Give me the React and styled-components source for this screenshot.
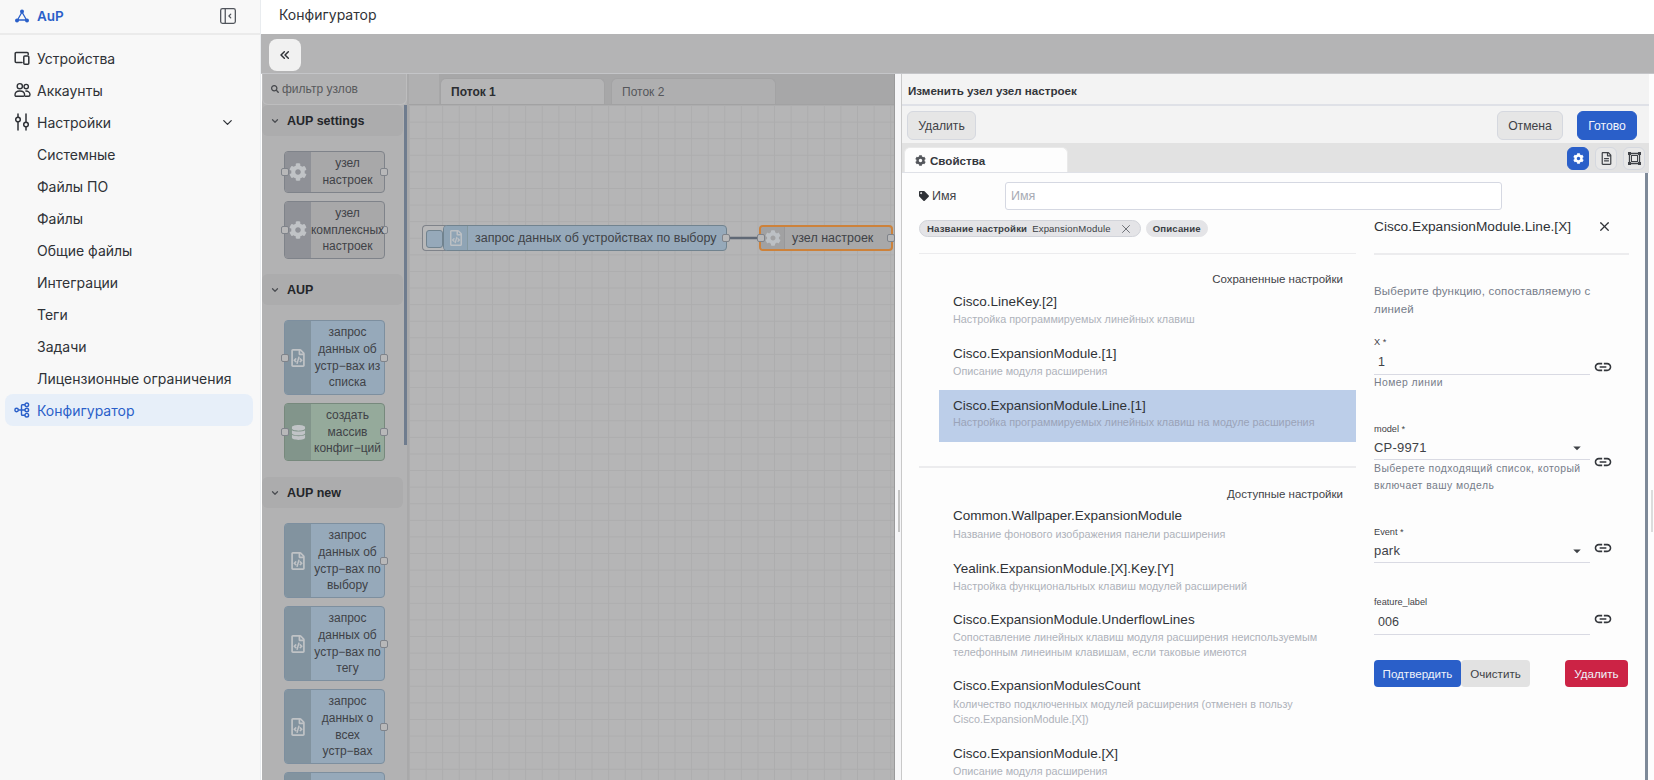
import React from 'react';
import styled, { createGlobalStyle } from 'styled-components';
import { FaCog, FaRegFileCode, FaDatabase, FaTag, FaRegFileAlt, FaSearch } from 'react-icons/fa';
import { TbChevronDown, TbChevronsLeft, TbLayoutSidebarLeftCollapse, TbX } from 'react-icons/tb';
import { MdLink, MdArrowDropDown } from 'react-icons/md';

const GlobalStyle = createGlobalStyle`
  html, body { margin: 0; padding: 0; height: 100%; overflow: hidden; }
  body { font-family: Inter, "Liberation Sans", sans-serif; background: #fff; }
  #root { height: 100%; }
  * { box-sizing: border-box; }
`;

const Page = styled.div`
  display: flex;
  width: 1654px;
  height: 780px;
  overflow: hidden;
`;

const Sidebar = styled.aside`
  width: 261px;
  flex: none;
  background: #f8f8f8;
  border-right: 1px solid #e9ecef;
  display: flex;
  flex-direction: column;
`;

const Brand = styled.div`
  height: 35px;
  border-bottom: 2px solid #ebebeb;
  display: flex;
  align-items: center;
  padding: 0 21px 2px 14px;
`;

const BrandName = styled.span`
  margin-left: 7px;
  font-size: 13.5px;
  font-weight: 600;
  color: #2a5fc9;
  flex: 1;
`;

const Nav = styled.nav`
  padding: 7px 7px 0 5px;
  display: flex;
  flex-direction: column;
`;

const NavItem = styled.div`
  height: 32px;
  display: flex;
  align-items: center;
  padding: 0 18px 0 9px;
  border-radius: 8px;
  font-size: 14px;
  white-space: nowrap;
  color: ${p => (p.$active ? '#2a5fc9' : '#2f3237')};
  background: ${p => (p.$active ? '#e7eff9' : 'transparent')};
  svg { flex: none; }
`;

const NavIcon = styled.span`
  width: 23px;
  flex: none;
  display: flex;
  align-items: center;
`;

const NavLabel = styled.span`
  flex: 1;
`;

const SubNavItem = styled(NavItem)`
  padding-left: 32px;
`;

const Main = styled.main`
  flex: 1;
  min-width: 0;
  display: flex;
  flex-direction: column;
  position: relative;
`;

const TopBar = styled.header`
  height: 34px;
  flex: none;
  background: #fff;
  display: flex;
  align-items: center;
  padding: 0 18px 5px;
  font-size: 14px;
  color: #2f3237;
`;

const Toolbar = styled.div`
  height: 40px;
  flex: none;
  background: #b4b4b5;
  border-bottom: 1px solid #c4c5c8;
  padding: 5px 8px;
`;

const CollapseButton = styled.button`
  width: 32px;
  height: 32px;
  border: 0;
  padding: 0;
  border-radius: 8px;
  background: #f1f1f1;
  color: #2f3237;
  display: flex;
  align-items: center;
  justify-content: center;
`;

const Editor = styled.div`
  flex: 1;
  min-height: 0;
  display: flex;
  font-family: "Liberation Sans", Arial, sans-serif;
`;

const Palette = styled.div`
  width: 147px;
  flex: none;
  margin-left: 1px;
  background: #b2b2b3;
  border-right: 2px solid #a9a9aa;
  position: relative;
  overflow: hidden;
`;

const PaletteFilter = styled.div`
  height: 31px;
  display: flex;
  align-items: center;
  gap: 3px;
  padding-left: 8px;
  font-size: 12px;
  color: #58595c;
  border: 1px solid #bdbdbe;
  border-top: 0;
  border-radius: 0 0 6px 6px;
  svg { color: #45474b; }
`;

const PaletteScroll = styled.span`
  position: absolute;
  right: 0;
  top: 31px;
  width: 3px;
  height: 340px;
  background: #6f7c8e;
`;

const PaletteSection = styled.section`
  padding-right: 4px;
  margin-bottom: ${p => p.$gap || 0}px;
`;

const CategoryHeader = styled.div`
  height: 31px;
  display: flex;
  align-items: center;
  gap: 7px;
  padding-left: 8px;
  background: #acacad;
  border-radius: 6px;
  font-size: 12.5px;
  font-weight: 700;
  color: #24262a;
  svg { color: #4b4d52; }
`;

const NodeStack = styled.div`
  padding: 15px 0 0 22px;
  display: flex;
  flex-direction: column;
  gap: ${p => p.$gap || 8}px;
`;

const PaletteNode = styled.div`
  width: 101px;
  height: ${p => p.$h}px;
  flex: none;
  position: relative;
  display: flex;
  border: 1px solid ${p => (p.$kind === 'blue' ? '#7d8f9f' : p.$kind === 'green' ? '#77897d' : '#7f838a')};
  border-radius: 4px;
  background: ${p => (p.$kind === 'blue' ? '#96a9ba' : p.$kind === 'green' ? '#95aa9b' : '#a8a8a9')};
`;

const NodeIcon = styled.div`
  width: 26px;
  flex: none;
  display: flex;
  align-items: center;
  justify-content: center;
  color: #c0c3c6;
  border-radius: 3px 0 0 3px;
  background: ${p => (p.$kind === 'blue' ? '#82939f' : p.$kind === 'green' ? '#82958b' : '#8f9197')};
`;

const NodeText = styled.div`
  flex: 1;
  min-width: 0;
  position: relative;
  z-index: 1;
  text-align: center;
  font-size: 12px;
  line-height: 16.6px;
  white-space: nowrap;
  color: #3f4247;
  display: flex;
  align-items: center;
  justify-content: center;
`;

const Port = styled.span`
  position: absolute;
  top: 50%;
  ${p => (p.$side === 'left' ? 'left: -4px;' : 'right: -4px;')}
  width: 8px;
  height: 8px;
  margin-top: -4px;
  background: #b8b8b9;
  border: 1px solid #7f838a;
  border-radius: 2px;
`;

const Flow = styled.div`
  width: 486px;
  flex: none;
  display: flex;
  flex-direction: column;
  border-right: 1px solid #9a9a9b;
`;

const TabStrip = styled.div`
  height: 31px;
  flex: none;
  background: linear-gradient(to right, #b0b0b1 30px, #a7a7a8 30px);
  border-bottom: 1px solid #a2a2a3;
  display: flex;
  align-items: flex-end;
  gap: 6px;
  padding-left: 31px;
`;

const FlowTab = styled.div`
  width: 165px;
  height: 26px;
  display: flex;
  align-items: center;
  padding-left: 10px;
  font-size: 12px;
  border: 1px solid #a3a3a4;
  border-bottom: 0;
  border-radius: 6px 6px 0 0;
  font-weight: ${p => (p.$active ? 700 : 400)};
  color: ${p => (p.$active ? '#2b2d31' : '#55575b')};
  background: ${p => (p.$active ? '#b5b5b6' : '#afafb0')};
`;

const Canvas = styled.div`
  flex: 1;
  position: relative;
  background-color: #b5b5b6;
  background-image:
    linear-gradient(#adadae 1px, transparent 1px),
    linear-gradient(90deg, #adadae 1px, transparent 1px);
  background-size: 16.6px 16.6px;
`;

const FlowNode = styled.div`
  position: absolute;
  top: 120px;
  left: ${p => p.$x}px;
  width: ${p => p.$w}px;
  height: 26px;
  display: flex;
  align-items: center;
  font-size: 12.5px;
  color: #3f4247;
  background: ${p => (p.$selected ? '#a8a8a9' : '#96a9ba')};
  border: ${p => (p.$selected ? '2px solid #cd823b' : '1px solid #71838f')};
  border-radius: 4px;
`;

const FlowNodeIcon = styled.span`
  width: 24px;
  height: 100%;
  flex: none;
  display: flex;
  align-items: center;
  justify-content: center;
  color: #bcc0c4;
  background: ${p => (p.$selected ? '#a1a1a2' : '#8fa4b5')};
  border-right: 1px solid ${p => (p.$selected ? '#98989a' : '#84989f')};
  border-radius: 3px 0 0 3px;
  margin-right: 7px;
`;

const InjectButton = styled.div`
  position: absolute;
  top: 120px;
  left: 13px;
  width: 24px;
  height: 26px;
  border: 1px solid #7f838a;
  border-right: 0;
  border-radius: 4px 0 0 4px;
  background: #b8b8b9;
  padding: 4px 3px;
  &::after {
    content: '';
    display: block;
    width: 15px;
    height: 16px;
    background: #96a9ba;
    border: 1px solid #71838f;
    border-radius: 3px;
  }
`;

const Wire = styled.svg`
  position: absolute;
  top: 131px;
  left: 320px;
`;

const Gutter = styled.div`
  width: 7px;
  flex: none;
  background: #f6f6f8;
  border-right: 1px solid #c9c9c9;
  padding: 416px 2px 0 3px;
`;

const GutterHandle = styled.span`
  display: block;
  width: 2px;
  height: 42px;
  background: #c4c4c4;
`;

const Tray = styled.div`
  width: 752px;
  flex: none;
  padding-right: 5px;
  background: #fdfdfd;
  display: flex;
  flex-direction: column;
  position: relative;
  overflow: hidden;
`;

const TrayHandle = styled.span`
  position: absolute;
  top: 416px;
  right: 1px;
  width: 2px;
  height: 42px;
  background: #dcdcdc;
`;

const TrayTitle = styled.div`
  height: 32px;
  flex: none;
  display: flex;
  align-items: center;
  padding: 3px 0 0 6px;
  background: #f3f3f3;
  border-bottom: 2px solid #dfe1e7;
  font-size: 11.6px;
  font-weight: 700;
  color: #33363b;
`;

const TrayActions = styled.div`
  height: 37px;
  flex: none;
  display: flex;
  align-items: flex-start;
  padding: 5px 12px 0 5px;
  background: #f3f3f3;
  gap: 14px;
`;

const ActionButton = styled.button`
  height: 29px;
  width: ${p => p.$w}px;
  padding: 0;
  border-radius: 6px;
  font-family: inherit;
  font-size: 12.2px;
  border: 1px solid ${p => (p.$primary ? '#2a5fc9' : '#d5d8df')};
  background: ${p => (p.$primary ? '#2a5fc9' : '#e6e6e6')};
  color: ${p => (p.$primary ? '#f2f5fb' : '#3f4247')};
`;

const Spacer = styled.span`
  flex: 1;
`;

const TrayTabs = styled.div`
  height: 30px;
  flex: none;
  display: flex;
  align-items: flex-end;
  background: #e2e2e2;
  border-bottom: 1px solid #dfe1e7;
  padding: 0 4px 0 2px;
`;

const PropsTab = styled.div`
  width: 164px;
  height: 25px;
  display: flex;
  align-items: center;
  gap: 4px;
  padding-left: 10px;
  background: #fdfdfd;
  border-radius: 6px 6px 0 0;
  border: 1px solid #e9e9e9;
  border-bottom: 0;
  font-size: 11.6px;
  font-weight: 700;
  color: #35383d;
  svg { color: #54575c; }
`;

const TabIcons = styled.div`
  margin-left: auto;
  align-self: center;
  display: flex;
  gap: 6px;
  padding-top: 1px;
`;

const TabIconButton = styled.div`
  width: 22px;
  height: 23px;
  border-radius: 6px;
  display: flex;
  align-items: center;
  justify-content: center;
  background: ${p => (p.$active ? '#2a5fc9' : '#e8e8e8')};
  color: ${p => (p.$active ? '#fff' : '#3f4247')};
  border: 1px solid ${p => (p.$active ? '#2a5fc9' : '#d5d8df')};
`;

const TrayBody = styled.div`
  flex: 1;
  min-height: 0;
  padding: 8px 0 0 17px;
  position: relative;
`;

const BodyScroll = styled.span`
  position: absolute;
  top: 0;
  right: 1px;
  width: 3px;
  height: 100%;
  background: #7e8a99;
`;

const NameRow = styled.div`
  display: flex;
  align-items: center;
  height: 29px;
`;

const NameLabel = styled.label`
  width: 86px;
  flex: none;
  display: flex;
  align-items: center;
  gap: 3px;
  font-size: 12.5px;
  color: #3f4247;
  svg { color: #2f3237; }
`;

const NameInput = styled.input`
  width: 497px;
  height: 28px;
  padding: 0 5px;
  border: 1px solid #d5d8e2;
  border-radius: 3px;
  background: #fff;
  font-family: inherit;
  font-size: 12.5px;
  &::placeholder { color: #a7abb4; }
`;

const Columns = styled.div`
  display: flex;
  gap: 18px;
  padding-top: 6px;
`;

const LeftColumn = styled.div`
  width: 437px;
  flex: none;
`;

const RightColumn = styled.div`
  width: 255px;
  flex: none;
`;

const Chips = styled.div`
  display: flex;
  gap: 5px;
  height: 17px;
  margin-top: 4px;
`;

const Chip = styled.div`
  height: 17px;
  display: flex;
  align-items: center;
  padding: 0 ${p => (p.$outline ? 7 : 6)}px;
  border-radius: 9px;
  background: #e4e4e7;
  border: 1px solid ${p => (p.$outline ? '#d2d4da' : '#e4e4e7')};
  font-size: 9.6px;
  letter-spacing: 0.15px;
  color: #3b3e44;
`;

const ChipKey = styled.b`
  font-weight: 700;
  margin-right: ${p => (p.$flush ? 0 : 5)}px;
`;

const ChipClose = styled(TbX)`
  margin-left: 8px;
  color: #55585e;
`;

const Divider = styled.hr`
  border: 0;
  height: ${p => p.$h || 1}px;
  background: #ececee;
  margin: ${p => p.$m};
`;

const ListHeading = styled.div`
  text-align: right;
  padding-right: 13px;
  font-size: 11.5px;
  line-height: 14px;
  color: #3f4247;
`;

const SettingItem = styled.div`
  margin-left: 20px;
  padding: ${p => p.$top || 7}px 14px 0;
  height: ${p => p.$h || 52}px;
  background: ${p => (p.$selected ? '#bccee9' : 'transparent')};
`;

const SettingName = styled.div`
  font-size: 13.5px;
  line-height: 18px;
  color: #2f3237;
`;

const SettingHint = styled.div`
  margin-top: ${p => (p.$gap === undefined ? 1 : p.$gap)}px;
  font-size: 10.8px;
  line-height: 15px;
  white-space: nowrap;
  color: ${p => (p.$selected ? '#9aa3b8' : '#aeb2ba')};
`;

const DetailHeader = styled.div`
  display: flex;
  align-items: center;
  height: 20px;
  font-size: 13.7px;
  color: #2f3237;
  padding-right: 17px;
  justify-content: space-between;
`;

const DetailIntro = styled.p`
  margin: 27px 0 0;
  width: 225px;
  font-size: 11.5px;
  line-height: 18px;
  letter-spacing: 0.2px;
  color: #767c89;
`;

const Field = styled.div`
  display: flex;
  margin-top: ${p => p.$top}px;
`;

const FieldMain = styled.div`
  width: 216px;
  flex: none;
`;

const FieldLabel = styled.div`
  font-size: 9.2px;
  line-height: 14px;
  color: #3f4247;
`;

const FieldValue = styled.div`
  height: ${p => (p.$select ? 24 : 26)}px;
  display: flex;
  align-items: center;
  justify-content: space-between;
  padding-left: ${p => (p.$select ? 0 : 4)}px;
  border-bottom: 1px solid #d9dae3;
  font-size: ${p => (p.$select ? 13 : 12.5)}px;
  letter-spacing: ${p => (p.$select ? 0.2 : 0)}px;
  color: #3f4247;
  svg { color: #3f4247; margin-right: 4px; }
`;

const FieldHelp = styled.div`
  font-size: 10.4px;
  line-height: 17px;
  letter-spacing: 0.45px;
  color: #767c89;
  margin-top: ${p => p.$top || 0}px;
`;

const LinkButton = styled.span`
  margin-left: 3px;
  margin-top: ${p => p.$top}px;
  color: #33363b;
  display: flex;
  height: 20px;
`;

const FormButtons = styled.div`
  display: flex;
  margin-top: 25px;
`;

const FormButton = styled.button`
  height: 27px;
  width: ${p => p.$w}px;
  padding: 0;
  border: 0;
  border-radius: 4px;
  font-family: inherit;
  font-size: 11.6px;
  margin-left: ${p => p.$left || 0}px;
  color: ${p => (p.$tone === 'plain' ? '#3f4247' : '#eef2fa')};
  background: ${p => (p.$tone === 'blue' ? '#2a5fc9' : p.$tone === 'red' ? '#cc2345' : '#e2e2e2')};
`;

const LogoIcon = () => (
  <svg width="16" height="16" viewBox="0 0 16 16" fill="none" stroke="#2a5fc9" strokeWidth="1.3">
    <path d="M8 4 L3.5 12 H12.5 Z" />
    <circle cx="8" cy="3.5" r="2" fill="#2a5fc9" stroke="none" />
    <circle cx="3" cy="12.5" r="2" fill="#2a5fc9" stroke="none" />
    <circle cx="13" cy="12.5" r="2" fill="#2a5fc9" stroke="none" />
  </svg>
);

const DevicesIcon = () => (
  <svg width="16" height="16" viewBox="0 0 16 16" fill="none" stroke="#2f3237" strokeWidth="1.5" strokeLinecap="round">
    <path d="M8 12.5H2.2a1 1 0 0 1-1-1V3.5a1 1 0 0 1 1-1h11a1 1 0 0 1 1 1v1" />
    <rect x="9.8" y="6" width="5" height="8.2" rx="1" />
  </svg>
);

const AccountsIcon = () => (
  <svg width="17" height="16" viewBox="0 0 17 16" fill="none" stroke="#2f3237" strokeWidth="1.4" strokeLinejoin="round">
    <circle cx="5.8" cy="4.2" r="2.6" />
    <circle cx="12.2" cy="4.6" r="2.2" />
    <path d="M1 13c0-2.6 2.2-4 4.8-4s4.8 1.4 4.8 4c0 .8-.5 1.3-1.2 1.3H2.2C1.5 14.3 1 13.8 1 13z" />
    <path d="M11.3 9.1c2.4-.3 4.7 1 4.7 3.4 0 1-.6 1.8-1.5 1.8h-3.6" />
  </svg>
);

const SlidersIcon = () => (
  <svg width="16" height="18" viewBox="0 0 16 18" fill="none" stroke="#2f3237" strokeWidth="1.5" strokeLinecap="round">
    <path d="M4 1v3M4 9v8M12 1v8M12 14v3" />
    <circle cx="4" cy="6.5" r="2.3" />
    <circle cx="12" cy="11.5" r="2.3" />
  </svg>
);

const SchemaIcon = () => (
  <svg width="16" height="16" viewBox="0 0 16 16" fill="none" stroke="#2a5fc9" strokeWidth="1.4">
    <circle cx="2.6" cy="8" r="1.7" />
    <circle cx="12.8" cy="2.8" r="1.8" />
    <circle cx="12.8" cy="8" r="1.8" />
    <circle cx="12.8" cy="13.2" r="1.8" />
    <path d="M4.3 8H11M7.5 8V3.6a.8.8 0 0 1 .8-.8H11M7.5 8v4.4a.8.8 0 0 0 .8.8H11" />
  </svg>
);

const FrameIcon = () => (
  <svg width="15" height="15" viewBox="0 0 15 15" fill="none" stroke="#3f4247" strokeWidth="1.3">
    <path d="M3 2.5h9M3 12.5h9M2.5 3v9M12.5 3v9" />
    <rect x="4.5" y="4.5" width="6" height="6" strokeWidth="1" />
    <g fill="#3f4247" stroke="none">
      <rect x="1" y="1" width="3" height="3" />
      <rect x="11" y="1" width="3" height="3" />
      <rect x="1" y="11" width="3" height="3" />
      <rect x="11" y="11" width="3" height="3" />
    </g>
  </svg>
);

const subItems = ['Системные', 'Файлы ПО', 'Файлы', 'Общие файлы', 'Интеграции', 'Теги', 'Задачи', 'Лицензионные ограничения'];

const paletteGroups = [
  { title: 'AUP settings', gap: 15, stackGap: 8, nodes: [
    { h: 42, kind: 'grey', icon: 'cog', lines: ['узел', 'настроек'], input: true, output: true },
    { h: 58, kind: 'grey', icon: 'cog', lines: ['узел', 'комплексных', 'настроек'], input: true, output: true },
  ] },
  { title: 'AUP', gap: 16, stackGap: 8, nodes: [
    { h: 75, kind: 'blue', icon: 'code', lines: ['запрос', 'данных об', 'устр−вах из', 'списка'], input: true, output: true },
    { h: 58, kind: 'green', icon: 'db', lines: ['создать', 'массив', 'конфиг−ций'], input: true, output: true },
  ] },
  { title: 'AUP new', stackGap: 8, nodes: [
    { h: 75, kind: 'blue', icon: 'code', lines: ['запрос', 'данных об', 'устр−вах по', 'выбору'], output: true },
    { h: 75, kind: 'blue', icon: 'code', lines: ['запрос', 'данных об', 'устр−вах по', 'тегу'], output: true },
    { h: 75, kind: 'blue', icon: 'code', lines: ['запрос', 'данных о', 'всех', 'устр−вах'], output: true },
    { h: 75, kind: 'blue', icon: 'code', lines: [''], output: true },
  ] },
];

const savedSettings = [
  { name: 'Cisco.LineKey.[2]', hint: ['Настройка программируемых линейных клавиш'] },
  { name: 'Cisco.ExpansionModule.[1]', hint: ['Описание модуля расширения'] },
  { name: 'Cisco.ExpansionModule.Line.[1]', hint: ['Настройка программируемых линейных клавиш на модуле расширения'], selected: true, gap: 0 },
];

const availableSettings = [
  { name: 'Common.Wallpaper.ExpansionModule', hint: ['Название фонового изображения панели расширения'], h: 52, top: 6, gap: 2 },
  { name: 'Yealink.ExpansionModule.[X].Key.[Y]', hint: ['Настройка функциональных клавиш модулей расширений'], h: 51 },
  { name: 'Cisco.ExpansionModule.UnderflowLines', hint: ['Сопоставление линейных клавиш модуля расширения неиспользуемым', 'телефонным линеиным клавишам, если таковые имеются'], h: 66 },
  { name: 'Cisco.ExpansionModulesCount', hint: ['Количество подключенных модулей расширения (отменен в пользу', 'Cisco.ExpansionModule.[X])'], h: 68, gap: 2 },
  { name: 'Cisco.ExpansionModule.[X]', hint: ['Описание модуля расширения'], h: 50 },
];

const nodeIcons = {
  cog: <FaCog size={18} />,
  code: <FaRegFileCode size={18} />,
  db: <FaDatabase size={15} />,
};

const SettingRow = ({ item }) => (
  <SettingItem $selected={item.selected} $h={item.h} $top={item.top}>
    <SettingName>{item.name}</SettingName>
    <SettingHint $selected={item.selected} $gap={item.gap}>
      {item.hint.map(line => <div key={line}>{line}</div>)}
    </SettingHint>
  </SettingItem>
);

export default function App() {
  return (
    <Page>
      <GlobalStyle />
      <Sidebar>
        <Brand>
          <LogoIcon />
          <BrandName>AuP</BrandName>
          <TbLayoutSidebarLeftCollapse size={22} color="#50545b" strokeWidth={1.4} />
        </Brand>
        <Nav>
          <NavItem>
            <NavIcon><DevicesIcon /></NavIcon>
            <NavLabel>Устройства</NavLabel>
          </NavItem>
          <NavItem>
            <NavIcon><AccountsIcon /></NavIcon>
            <NavLabel>Аккаунты</NavLabel>
          </NavItem>
          <NavItem>
            <NavIcon><SlidersIcon /></NavIcon>
            <NavLabel>Настройки</NavLabel>
            <TbChevronDown size={15} />
          </NavItem>
          {subItems.map(label => <SubNavItem key={label}>{label}</SubNavItem>)}
          <NavItem $active>
            <NavIcon><SchemaIcon /></NavIcon>
            <NavLabel>Конфигуратор</NavLabel>
          </NavItem>
        </Nav>
      </Sidebar>
      <Main>
        <TopBar>Конфигуратор</TopBar>
        <Toolbar>
          <CollapseButton><TbChevronsLeft size={16} strokeWidth={2.2} /></CollapseButton>
        </Toolbar>
        <Editor>
          <Palette>
            <PaletteFilter><FaSearch size={8} />фильтр узлов</PaletteFilter>
            <PaletteScroll />
            {paletteGroups.map(group => (
              <PaletteSection key={group.title} $gap={group.gap}>
                <CategoryHeader><TbChevronDown size={10} strokeWidth={3} />{group.title}</CategoryHeader>
                <NodeStack $gap={group.stackGap}>
                  {group.nodes.map((node, i) => (
                    <PaletteNode key={i} $h={node.h} $kind={node.kind}>
                      {node.input && <Port $side="left" />}
                      <NodeIcon $kind={node.kind}>{nodeIcons[node.icon]}</NodeIcon>
                      <NodeText>
                        <div>{node.lines.map(l => <div key={l}>{l}</div>)}</div>
                      </NodeText>
                      {node.output && <Port $side="right" />}
                    </PaletteNode>
                  ))}
                </NodeStack>
              </PaletteSection>
            ))}
          </Palette>
          <Flow>
            <TabStrip>
              <FlowTab $active>Поток 1</FlowTab>
              <FlowTab>Поток 2</FlowTab>
            </TabStrip>
            <Canvas>
              <InjectButton />
              <Wire width="38" height="4" viewBox="0 0 38 4">
                <path d="M0 2H38" stroke="#5f6875" strokeWidth="2.5" />
              </Wire>
              <FlowNode $x={34} $w={284}>
                <FlowNodeIcon><FaRegFileCode size={16} /></FlowNodeIcon>
                запрос данных об устройствах по выбору
                <Port $side="right" />
              </FlowNode>
              <FlowNode $x={350} $w={134} $selected>
                <Port $side="left" />
                <FlowNodeIcon $selected><FaCog size={16} /></FlowNodeIcon>
                узел настроек
                <Port $side="right" />
              </FlowNode>
            </Canvas>
          </Flow>
          <Gutter><GutterHandle /></Gutter>
          <Tray>
            <TrayHandle />
            <TrayTitle>Изменить узел узел настроек</TrayTitle>
            <TrayActions>
              <ActionButton $w={69}>Удалить</ActionButton>
              <Spacer />
              <ActionButton $w={66}>Отмена</ActionButton>
              <ActionButton $w={60} $primary>Готово</ActionButton>
            </TrayActions>
            <TrayTabs>
              <PropsTab><FaCog size={11} />Свойства</PropsTab>
              <TabIcons>
                <TabIconButton $active><FaCog size={11} /></TabIconButton>
                <TabIconButton><FaRegFileAlt size={13} /></TabIconButton>
                <TabIconButton><FrameIcon /></TabIconButton>
              </TabIcons>
            </TrayTabs>
            <TrayBody>
              <BodyScroll />
              <NameRow>
                <NameLabel><FaTag size={10} />Имя</NameLabel>
                <NameInput placeholder="Имя" />
              </NameRow>
              <Columns>
                <LeftColumn>
                  <Chips>
                    <Chip $outline>
                      <ChipKey>Название настройки</ChipKey>ExpansionModule
                      <ChipClose size={14} strokeWidth={1.4} />
                    </Chip>
                    <Chip><ChipKey $flush>Описание</ChipKey></Chip>
                  </Chips>
                  <Divider $m="16px 0 18px" />
                  <ListHeading>Сохраненные настройки</ListHeading>
                  {savedSettings.map(item => <SettingRow key={item.name} item={item} />)}
                  <Divider $h={2} $m="24px 0 19px" />
                  <ListHeading>Доступные настройки</ListHeading>
                  {availableSettings.map(item => <SettingRow key={item.name} item={item} />)}
                </LeftColumn>
                <RightColumn>
                  <DetailHeader>
                    Cisco.ExpansionModule.Line.[X]
                    <TbX size={15} strokeWidth={2} />
                  </DetailHeader>
                  <Divider $h={2} $m="17px 0 0" />
                  <DetailIntro>Выберите функцию, сопоставляемую с линией</DetailIntro>
                  <Field $top={17}>
                    <FieldMain>
                      <FieldLabel>X *</FieldLabel>
                      <FieldValue>1</FieldValue>
                      <FieldHelp $top={-1}>Номер линии</FieldHelp>
                    </FieldMain>
                    <LinkButton $top={22}><MdLink size={20} /></LinkButton>
                  </Field>
                  <Field $top={31}>
                    <FieldMain>
                      <FieldLabel>model *</FieldLabel>
                      <FieldValue $select>CP-9971<MdArrowDropDown size={18} /></FieldValue>
                      <FieldHelp>Выберете подходящий список, который включает вашу модель</FieldHelp>
                    </FieldMain>
                    <LinkButton $top={30}><MdLink size={20} /></LinkButton>
                  </Field>
                  <Field $top={31}>
                    <FieldMain>
                      <FieldLabel>Event *</FieldLabel>
                      <FieldValue $select>park<MdArrowDropDown size={18} /></FieldValue>
                    </FieldMain>
                    <LinkButton $top={13}><MdLink size={20} /></LinkButton>
                  </Field>
                  <Field $top={32}>
                    <FieldMain>
                      <FieldLabel>feature_label</FieldLabel>
                      <FieldValue>006</FieldValue>
                    </FieldMain>
                    <LinkButton $top={14}><MdLink size={20} /></LinkButton>
                  </Field>
                  <FormButtons>
                    <FormButton $w={87} $tone="blue">Подтвердить</FormButton>
                    <FormButton $w={69} $tone="plain">Очистить</FormButton>
                    <FormButton $w={63} $left={35} $tone="red">Удалить</FormButton>
                  </FormButtons>
                </RightColumn>
              </Columns>
            </TrayBody>
          </Tray>
        </Editor>
      </Main>
    </Page>
  );
}
